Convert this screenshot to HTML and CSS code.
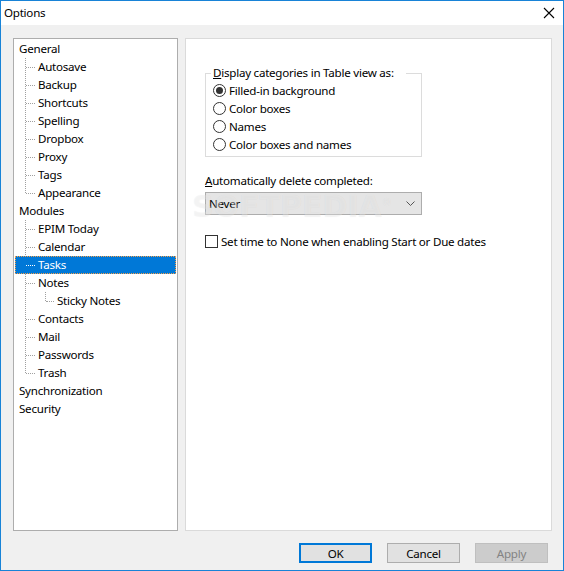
FILE: index.html
```html
<!DOCTYPE html>
<html>
<head>
<meta charset="utf-8">
<title>Options</title>
<link rel="stylesheet" href="styles.css">
</head>
<body>
<div class="window">
  <div class="titlebar">
    <span class="title">Options</span>
    <svg class="close" width="12" height="12" viewBox="0 0 12 12"><path d="M1 1 L11 11 M11 1 L1 11" stroke="#000" stroke-width="1.1" fill="none"/></svg>
  </div>
  <div class="main">
    <div class="panes">
      <div class="tree">
        <ul class="lvl0">
          <li><div class="row">General</div>
            <ul class="sub s1">
              <li><div class="row">Autosave</div></li>
              <li><div class="row">Backup</div></li>
              <li><div class="row">Shortcuts</div></li>
              <li><div class="row">Spelling</div></li>
              <li><div class="row">Dropbox</div></li>
              <li><div class="row">Proxy</div></li>
              <li><div class="row">Tags</div></li>
              <li><div class="row">Appearance</div></li>
            </ul>
          </li>
          <li><div class="row">Modules</div>
            <ul class="sub s1">
              <li><div class="row">EPIM Today</div></li>
              <li><div class="row">Calendar</div></li>
              <li><div class="row sel">Tasks</div></li>
              <li><div class="row">Notes</div>
                <ul class="sub s2">
                  <li><div class="row">Sticky Notes</div></li>
                </ul>
              </li>
              <li><div class="row">Contacts</div></li>
              <li><div class="row">Mail</div></li>
              <li><div class="row">Passwords</div></li>
              <li><div class="row">Trash</div></li>
            </ul>
          </li>
          <li><div class="row">Synchronization</div></li>
          <li><div class="row">Security</div></li>
        </ul>
      </div>
      <div class="page">
        <fieldset class="group">
          <legend><u>D</u>isplay categories in Table view as:</legend>
          <div class="opt"><span class="radio on"></span>Filled-in background</div>
          <div class="opt"><span class="radio"></span>Color boxes</div>
          <div class="opt"><span class="radio"></span>Names</div>
          <div class="opt"><span class="radio"></span>Color boxes and names</div>
        </fieldset>
        <div class="label"><u>A</u>utomatically delete completed:</div>
        <div class="combo">
          <span>Never</span>
          <svg width="9" height="5" viewBox="0 0 9 5"><path d="M0.5 0.5 L4.5 4.5 L8.5 0.5" stroke="#555" stroke-width="1" fill="none"/></svg>
        </div>
        <div class="check"><span class="box"></span>Set time to None when enabling Start or Due dates</div>
        <div class="watermark">SOFTPEDIA<sup>®</sup></div>
      </div>
    </div>
    <div class="buttons">
      <div class="btn default">OK</div>
      <div class="btn">Cancel</div>
      <div class="btn disabled">Apply</div>
    </div>
  </div>
</div>
</body>
</html>
```
FILE: styles.css
```css
* { box-sizing: border-box; }
html, body { margin: 0; padding: 0; }
body {
  font-family: "Noto Sans", "Open Sans", sans-serif;
  font-size: 11.6px;
  letter-spacing: -0.25px;
  color: #000;
  background: #fff;
}
.window {
  width: 564px;
  height: 571px;
  border: 1px solid #1883d7;
  display: flex;
  flex-direction: column;
  background: #f0f0f0;
}
.titlebar {
  height: 24px;
  background: #fff;
  display: flex;
  align-items: center;
  justify-content: space-between;
  padding: 0 8px 0 3px;
}
.title { line-height: 24px; }
.close { display: block; }
.main {
  flex: 1;
  padding: 13px 11px 0 12px;
}
.panes {
  display: flex;
  gap: 7px;
  height: 493px;
}
.tree {
  width: 165px;
  flex: none;
  height: 493px;
  background: #fff;
  border: 1px solid #adadad;
  padding: 1px;
}
.tree ul { list-style: none; margin: 0; padding: 0; }
.row {
  position: relative;
  height: 18px;
  line-height: 18px;
  padding-left: 4px;
  white-space: nowrap;
}
.sub { position: relative; }
.sub::before {
  content: "";
  position: absolute;
  top: 0;
  bottom: 9px;
  border-left: 1px dotted #a0a0a0;
}
.s1::before { left: 10px; }
.s2::before { left: 30px; }
.s1 > li > .row { padding-left: 23px; }
.s2 > li > .row { padding-left: 42px; }
.s1 > li > .row::before,
.s2 > li > .row::before {
  content: "";
  position: absolute;
  top: 9px;
  border-top: 1px dotted #a0a0a0;
}
.s1 > li > .row::before { left: 11px; width: 9px; }
.s2 > li > .row::before { left: 31px; width: 8px; }
.row.sel {
  background: #0078d7;
  color: #fff;
}
.s1 > li > .row.sel::before { border-top-color: #fff; }
.row.sel::after {
  content: "";
  position: absolute;
  inset: 0;
  border: 1px dotted #f5a04a;
}
.page {
  position: relative;
  flex: 1;
  height: 493px;
  background: #fff;
  border: 1px solid #dadada;
  padding: 26px 0 0 19px;
}
.group {
  width: 217px;
  margin: 0;
  padding: 0 0 3px 5px;
  border: 1px solid #dcdcdc;
}
.group legend {
  padding: 0 12px 0 2px;
  line-height: 16px;
  white-space: nowrap;
}
.opt {
  height: 18px;
  display: flex;
  align-items: center;
  padding-left: 2px;
  white-space: nowrap;
}
.radio {
  width: 13px;
  height: 13px;
  border: 1px solid #333;
  border-radius: 50%;
  margin-right: 3px;
  display: flex;
  align-items: center;
  justify-content: center;
  flex: none;
}
.radio.on::after {
  content: "";
  width: 7px;
  height: 7px;
  border-radius: 50%;
  background: #333;
}
.label {
  margin-top: 15px;
  line-height: 18px;
}
.combo {
  margin-top: 2px;
  width: 217px;
  height: 23px;
  background: #e5e5e5;
  border: 1px solid #adadad;
  display: flex;
  align-items: center;
  justify-content: space-between;
  padding: 0 6px 0 3px;
}
.check {
  margin-top: 17px;
  height: 18px;
  display: flex;
  align-items: center;
  white-space: nowrap;
}
.box {
  width: 13px;
  height: 13px;
  border: 1px solid #333;
  background: #fff;
  margin-right: 3px;
  flex: none;
}
.watermark {
  position: absolute;
  left: 6px;
  top: 150px;
  font-family: "DejaVu Sans", sans-serif;
  font-weight: bold;
  font-size: 30px;
  letter-spacing: 0;
  color: rgba(255, 255, 255, 0.35);
  text-shadow: 0 0 1px rgba(0, 0, 0, 0.07);
  pointer-events: none;
}
.watermark sup { font-size: 10px; font-weight: normal; }
.buttons {
  margin-top: 12px;
  padding-right: 4px;
  display: flex;
  justify-content: flex-end;
  gap: 15px;
}
.btn {
  width: 73px;
  height: 20px;
  background: #e1e1e1;
  border: 1px solid #adadad;
  display: flex;
  align-items: center;
  justify-content: center;
}
.btn.default { border: 2px solid #0078d7; }
.btn.disabled { background: #cccccc; border-color: #bfbfbf; color: #838383; }
```
